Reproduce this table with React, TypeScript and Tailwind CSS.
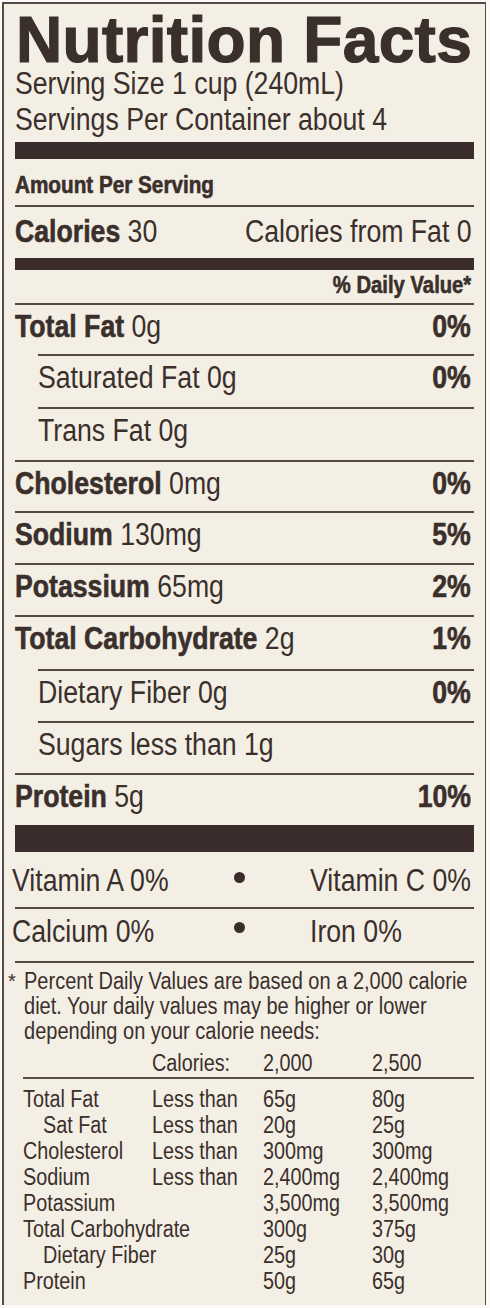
type Row = {
  bold?: string;
  value?: string;
  plain?: string;
  pct?: string;
  indent?: boolean;
  h: string;
};

const rows: Row[] = [
  { bold: "Total Fat", value: "0g", pct: "0%", h: "h-[51px]" },
  { plain: "Saturated Fat 0g", pct: "0%", indent: true, h: "h-[53px]" },
  { plain: "Trans Fat 0g", indent: true, h: "h-[53px]" },
  { bold: "Cholesterol", value: "0mg", pct: "0%", h: "h-[51px]" },
  { bold: "Sodium", value: "130mg", pct: "5%", h: "h-[52px]" },
  { bold: "Potassium", value: "65mg", pct: "2%", h: "h-[52px]" },
  { bold: "Total Carbohydrate", value: "2g", pct: "1%", h: "h-[54px]" },
  { plain: "Dietary Fiber 0g", pct: "0%", indent: true, h: "h-[52px]" },
  { plain: "Sugars less than 1g", indent: true, h: "h-[52px]" },
  { bold: "Protein", value: "5g", pct: "10%", h: "h-[52px]" },
];

const limits = [
  { name: "Total Fat", less: "Less than", a: "65g", b: "80g" },
  { name: "Sat Fat", less: "Less than", a: "20g", b: "25g", sub: true },
  { name: "Cholesterol", less: "Less than", a: "300mg", b: "300mg" },
  { name: "Sodium", less: "Less than", a: "2,400mg", b: "2,400mg" },
  { name: "Potassium", less: "", a: "3,500mg", b: "3,500mg" },
  { name: "Total Carbohydrate", less: "", a: "300g", b: "375g" },
  { name: "Dietary Fiber", less: "", a: "25g", b: "30g", sub: true },
  { name: "Protein", less: "", a: "50g", b: "65g" },
];

// the label uses a condensed face; squeeze Liberation Sans to match
const Narrow = ({ children, right = false }: { children: React.ReactNode; right?: boolean }) => (
  <span className={`inline-block scale-x-[0.86] ${right ? "origin-right" : "origin-left"}`}>{children}</span>
);

const Heavy = ({ children }: { children: React.ReactNode }) => (
  <span className="font-bold [-webkit-text-stroke:0.6px_#3b2f2c]">{children}</span>
);

const NutrientRow = ({ row }: { row: Row }) => (
  <div
    className={`${row.h} ${row.indent ? "ml-[23px]" : ""} border-t-2 border-[#554945] flex justify-between leading-[44px] text-[31px] whitespace-nowrap`}
  >
    <div>
      <Narrow>
        {row.bold ? (
          <>
            <Heavy>{row.bold}</Heavy> {row.value}
          </>
        ) : (
          row.plain
        )}
      </Narrow>
    </div>
    {row.pct && (
      <div className="pr-[3px]">
        <Narrow right>
          <Heavy>{row.pct}</Heavy>
        </Narrow>
      </div>
    )}
  </div>
);

export default function App() {
  return (
    <div className="w-[490px] h-[1308px] bg-[#fbfaf6] pt-[2px] pl-[2px] overflow-hidden">
      <div className="font-['Liberation_Sans',Arial,sans-serif] w-[484px] h-[1303px] bg-[#f3efe5] border-t-2 border-l-2 border-r border-[#564b47] pt-[10px] pl-[11px] pr-[11px] text-[#3b2f2c]">
        <h1 className="font-bold text-[64px] leading-[52px] ml-[1px] tracking-[0.3px] whitespace-nowrap [-webkit-text-stroke:1.2px_#3b2f2c]">
          Nutrition Facts
        </h1>
        <div className="text-[31px] leading-[36px] whitespace-nowrap">
          <div>
            <Narrow>Serving Size 1 cup (240mL)</Narrow>
          </div>
          <div>
            <Narrow>Servings Per Container about 4</Narrow>
          </div>
        </div>
        <div className="mt-[4px] h-[17px] bg-[#3b2d2b]" />

        <div className="h-[46px] pt-[6px] leading-[40px] text-[23px] whitespace-nowrap">
          <span className="inline-block origin-left scale-x-[0.9]">
            <Heavy>Amount Per Serving</Heavy>
          </span>
        </div>

        <div className="h-[53px] border-t-2 border-[#554945] flex justify-between leading-[49px] text-[31px] whitespace-nowrap">
          <div>
            <Narrow>
              <Heavy>Calories</Heavy> 30
            </Narrow>
          </div>
          <div className="pr-[2px]">
            <Narrow right>Calories from Fat 0</Narrow>
          </div>
        </div>

        <div className="h-[12px] bg-[#3b2d2b]" />

        <div className="h-[33px] leading-[31px] text-[23px] text-right pr-[3px] whitespace-nowrap">
          <span className="inline-block origin-right scale-x-[0.88]">
            <Heavy>% Daily Value*</Heavy>
          </span>
        </div>

        {rows.map((r) => (
          <NutrientRow key={r.bold ?? r.plain} row={r} />
        ))}

        <div className="h-[27px] bg-[#3b2d2b]" />

        <div className="h-[55px] pt-[5px] -ml-[3px] grid grid-cols-[198px_58px_1fr] leading-[48px] text-[31px] whitespace-nowrap">
          <div>
            <Narrow>Vitamin A 0%</Narrow>
          </div>
          <div className="flex justify-center pt-[15px]">
            <div className="w-[11px] h-[11px] rounded-full bg-[#3b2d2b]" />
          </div>
          <div className="pl-[42px]">
            <Narrow>Vitamin C 0%</Narrow>
          </div>
        </div>

        <div className="h-[54px] border-t-2 border-[#554945] grid grid-cols-[195px_58px_1fr] leading-[46px] text-[31px] whitespace-nowrap">
          <div className="-ml-[3px]">
            <Narrow>Calcium 0%</Narrow>
          </div>
          <div className="flex justify-center pt-[13px]">
            <div className="w-[11px] h-[11px] rounded-full bg-[#3b2d2b]" />
          </div>
          <div className="pl-[42px]">
            <Narrow>Iron 0%</Narrow>
          </div>
        </div>

        <div className="border-t-2 border-[#554945] pt-[6px] text-[23px] leading-[25px] whitespace-nowrap">
          <div className="flex -ml-[7px]">
            <span className="w-[16px] shrink-0 text-[20px]">*</span>
            <span className="inline-block origin-left scale-x-[0.87]">
              Percent Daily Values are based on a 2,000 calorie
              <br />
              diet. Your daily values may be higher or lower
              <br />
              depending on your calorie needs:
            </span>
          </div>

          <div className="mt-[7px] ml-[8px] grid grid-cols-[129px_111px_109px_1fr]">
            <div />
            <div>
              <Narrow>Calories:</Narrow>
            </div>
            <div>
              <Narrow>2,000</Narrow>
            </div>
            <div>
              <Narrow>2,500</Narrow>
            </div>
          </div>
          <div className="mt-[1px] ml-[8px] h-[2px] bg-[#5a4e49]" />

          <div className="pt-[7px] ml-[8px] leading-[26px]">
            {limits.map((l) => (
              <div key={l.name} className="grid grid-cols-[129px_111px_109px_1fr]">
                <div className={l.sub ? "pl-[20px]" : ""}>
                  <Narrow>{l.name}</Narrow>
                </div>
                <div>
                  <Narrow>{l.less}</Narrow>
                </div>
                <div>
                  <Narrow>{l.a}</Narrow>
                </div>
                <div>
                  <Narrow>{l.b}</Narrow>
                </div>
              </div>
            ))}
          </div>
        </div>
      </div>
    </div>
  );
}
